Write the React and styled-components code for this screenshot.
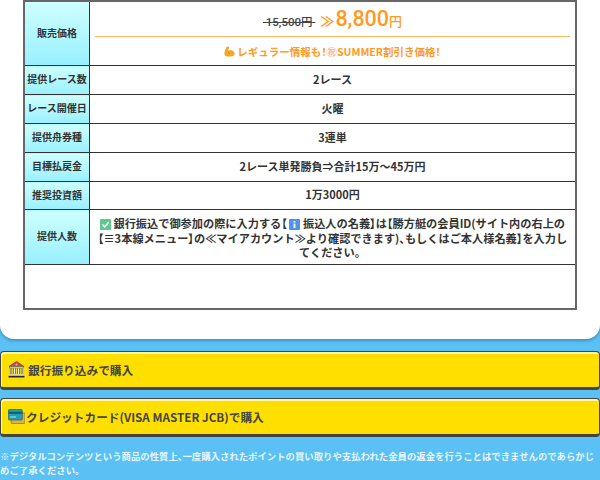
import React from 'react'
import styled, { createGlobalStyle } from 'styled-components'

const Global = createGlobalStyle`
  html, body { margin: 0; padding: 0; }
  body {
    width: 600px;
    height: 480px;
    overflow: hidden;
    background: #5bc0f4;
    font-family: "Noto Sans CJK JP", "Noto Sans", sans-serif;
    color: #333;
  }
`

const Panel = styled.div`
  background: #fff;
  height: 339px;
  padding: 0 23px;
  box-sizing: border-box;
  border-radius: 0 0 14px 14px;
  box-shadow: 0 2px 3px rgba(40, 120, 170, 0.6);
`

const Table = styled.table`
  width: 554px;
  border-collapse: collapse;
  table-layout: fixed;
  border: 2px solid #666;
`

const Row = styled.tr`
  height: ${p => p.$h}px;
`

const Label = styled.th`
  width: 64px;
  padding: 0 0 3px;
  border: 1px solid #333;
  background: linear-gradient(#ceffff, #98f0ff);
  font-size: 10px;
  font-weight: 700;
  color: #333;
  text-align: center;
  white-space: nowrap;
`

const Cell = styled.td`
  padding: 0 0 3px;
  border: 1px solid #333;
  font-size: 11px;
  font-weight: 700;
  text-align: center;
  color: #333;
`

const PriceCell = styled(Cell)`
  padding: 0;
`

const NoteCell = styled(Cell)`
  padding: 6px 6px 4px;
  font-size: 11.2px;
  line-height: 14.5px;
  vertical-align: top;
`

// brackets and punctuation sit half width in the reference
const Half = styled.span`
  font-feature-settings: "palt";
`

const PriceLine = styled.div`
  display: flex;
  justify-content: center;
  align-items: baseline;
  height: 35px;
  margin: 0 5px;
  box-sizing: border-box;
  border-bottom: 1px solid #ffb966;
  padding-top: 2px;
`

const OldPrice = styled.s`
  font-family: Roboto, "Noto Sans CJK JP", sans-serif;
  font-size: 11.5px;
  font-weight: 500;
  color: #444;
  margin-right: 5px;
`

const NewPrice = styled.span`
  font-family: Roboto, "Noto Sans CJK JP", sans-serif;
  font-size: 21.5px;
  font-weight: 500;
  line-height: 30px;
  color: #ff9a22;
  small { font-size: 13px; }
`

const Arrows = styled.span`
  font-size: 14px;
  font-weight: 700;
  margin-right: 1px;
`

const Campaign = styled.div`
  display: flex;
  justify-content: center;
  align-items: center;
  gap: 2px;
  height: 28px;
  font-size: 10.5px;
  color: #ff9a22;
`

const Iwai = styled.span`
  color: #ffb98a;
`

const InlineIcon = styled.svg`
  display: inline-block;
  vertical-align: -2px;
  flex: none;
`

const BuyButton = styled.div`
  display: flex;
  align-items: center;
  gap: ${p => p.$gap}px;
  height: 39px;
  box-sizing: border-box;
  padding: 0 0 1px 7px;
  background: #ffdf00;
  border: 1px solid #444;
  border-bottom-width: 3px;
  border-radius: 4px;
  box-shadow: inset 1px 2px 0 #fff6a8;
  font-size: 11.7px;
  font-weight: 700;
  color: #444;
`

const Buttons = styled.div`
  display: flex;
  flex-direction: column;
  gap: 8px;
  margin-top: 12px;
`

const Note = styled.p`
  margin: 12px 0 0;
  font-size: 9.4px;
  line-height: 14px;
  font-weight: 700;
  color: #e6f6ff;
`

const Muscle = () => (
  <InlineIcon width="11" height="11" viewBox="0 0 11 11">
    <path d="M2.5 1 L4.8 0.5 L5.4 2 L4.3 3 L4.6 5 C5.5 3.8 7 3.8 8 4.6 C9.8 5 10.8 6.4 10.6 8 C10.4 10 8 10.6 5 10.6 C2 10.6 0.4 9.8 0.4 8 C0.4 5 1.6 3 2.5 1Z" fill="#f7a823" />
    <path d="M4.6 5 C4.4 6.5 5 7.5 6 8" fill="none" stroke="#e08a14" strokeWidth="0.6" />
  </InlineIcon>
)

const Check = () => (
  <InlineIcon width="11" height="11" viewBox="0 0 11 11">
    <rect width="11" height="11" rx="1" fill="#5fc88f" />
    <path d="M2.5 5.5 L4.7 7.8 L8.6 3.2" fill="none" stroke="#fff" strokeWidth="1.5" />
  </InlineIcon>
)

const Info = () => (
  <InlineIcon width="11" height="11" viewBox="0 0 11 11">
    <rect width="11" height="11" rx="1" fill="#4f94e6" />
    <rect x="4.6" y="2" width="1.8" height="1.6" fill="#fff" />
    <rect x="4.6" y="4.6" width="1.8" height="4.4" fill="#fff" />
  </InlineIcon>
)

const Bank = () => (
  <InlineIcon width="17" height="17" viewBox="0 0 17 17">
    <path d="M8.5 0.5 L16 5.5 L1 5.5Z" fill="#d9386a" stroke="#333" strokeWidth="0.6" />
    <circle cx="8.5" cy="3.6" r="1" fill="#ffd23c" />
    <rect x="1.5" y="5.5" width="14" height="1.5" fill="#f6e6c8" stroke="#333" strokeWidth="0.4" />
    <path d="M3 7.3v6M6.5 7.3v6M10.5 7.3v6M14 7.3v6" stroke="#3c4658" strokeWidth="2.2" />
    <path d="M3 7.3v6M6.5 7.3v6M10.5 7.3v6M14 7.3v6" stroke="#e8eef2" strokeWidth="1" />
    <rect x="1.5" y="13.3" width="14" height="1.4" fill="#f3d9b0" />
    <rect x="0.5" y="14.8" width="16" height="1.7" fill="#1f2a45" />
  </InlineIcon>
)

const Card = () => (
  <InlineIcon width="17" height="15" viewBox="0 0 17 15">
    <rect x="3" y="4" width="14" height="10.5" rx="1" fill="#d8b24a" stroke="#7a6a30" strokeWidth="0.6" />
    <rect x="0.3" y="0.5" width="14" height="10.5" rx="1" fill="#1fa0b4" stroke="#22505c" strokeWidth="0.6" />
    <rect x="0.5" y="2.8" width="13.6" height="2" fill="#175a6a" />
    <path d="M2 8h6" stroke="#d5f3f5" strokeWidth="0.8" />
  </InlineIcon>
)

const rows = [
  ['提供レース数', '2レース', 29],
  ['レース開催日', '火曜', 29],
  ['提供舟券種', '3連単', 29],
  ['目標払戻金', '2レース単発勝負⇒合計15万～45万円', 29],
  ['推奨投資額', '1万3000円', 28],
]

export default function App() {
  return (
    <>
      <Global />
      <Panel>
        <Table>
          <tbody>
            <Row $h={63}>
              <Label>販売価格</Label>
              <PriceCell>
                <PriceLine>
                  <OldPrice>&nbsp;15,500円&nbsp;</OldPrice>
                  <NewPrice><Arrows>≫</Arrows>8,800<small>円</small></NewPrice>
                </PriceLine>
                <Campaign>
                  <Muscle />
                  <span>レギュラー情報も<Half>！</Half><Iwai>㊗</Iwai>SUMMER割引き価格<Half>！</Half></span>
                </Campaign>
              </PriceCell>
            </Row>
            {rows.map(([label, value, h]) => (
              <Row key={label} $h={h}>
                <Label>{label}</Label>
                <Cell>{value}</Cell>
              </Row>
            ))}
            <Row $h={55}>
              <Label>提供人数</Label>
              <NoteCell>
                <Check /> 銀行振込で御参加の際に入力する<Half>【</Half> <Info /> 振込人の名義<Half>】</Half>は<Half>【</Half>勝方艇の会員ID(サイト内の右上の<Half>【</Half>≡3本線メニュー<Half>】</Half>の≪マイアカウント≫より確認できます)<Half>、</Half>もしくはご本人様名義<Half>】</Half>を入力してください。
              </NoteCell>
            </Row>
            <Row $h={44}>
              <Cell colSpan={2} />
            </Row>
          </tbody>
        </Table>
      </Panel>
      <Buttons>
        <BuyButton $gap={3}><Bank />銀行振り込みで購入</BuyButton>
        <BuyButton $gap={1}><Card />クレジットカード(VISA MASTER JCB)で購入</BuyButton>
      </Buttons>
      <Note>※デジタルコンテンツという商品の性質上<Half>、</Half>一度購入されたポイントの買い取りや支払われた金員の返金を行うことはできませんのであらかじめご了承ください。</Note>
    </>
  )
}
